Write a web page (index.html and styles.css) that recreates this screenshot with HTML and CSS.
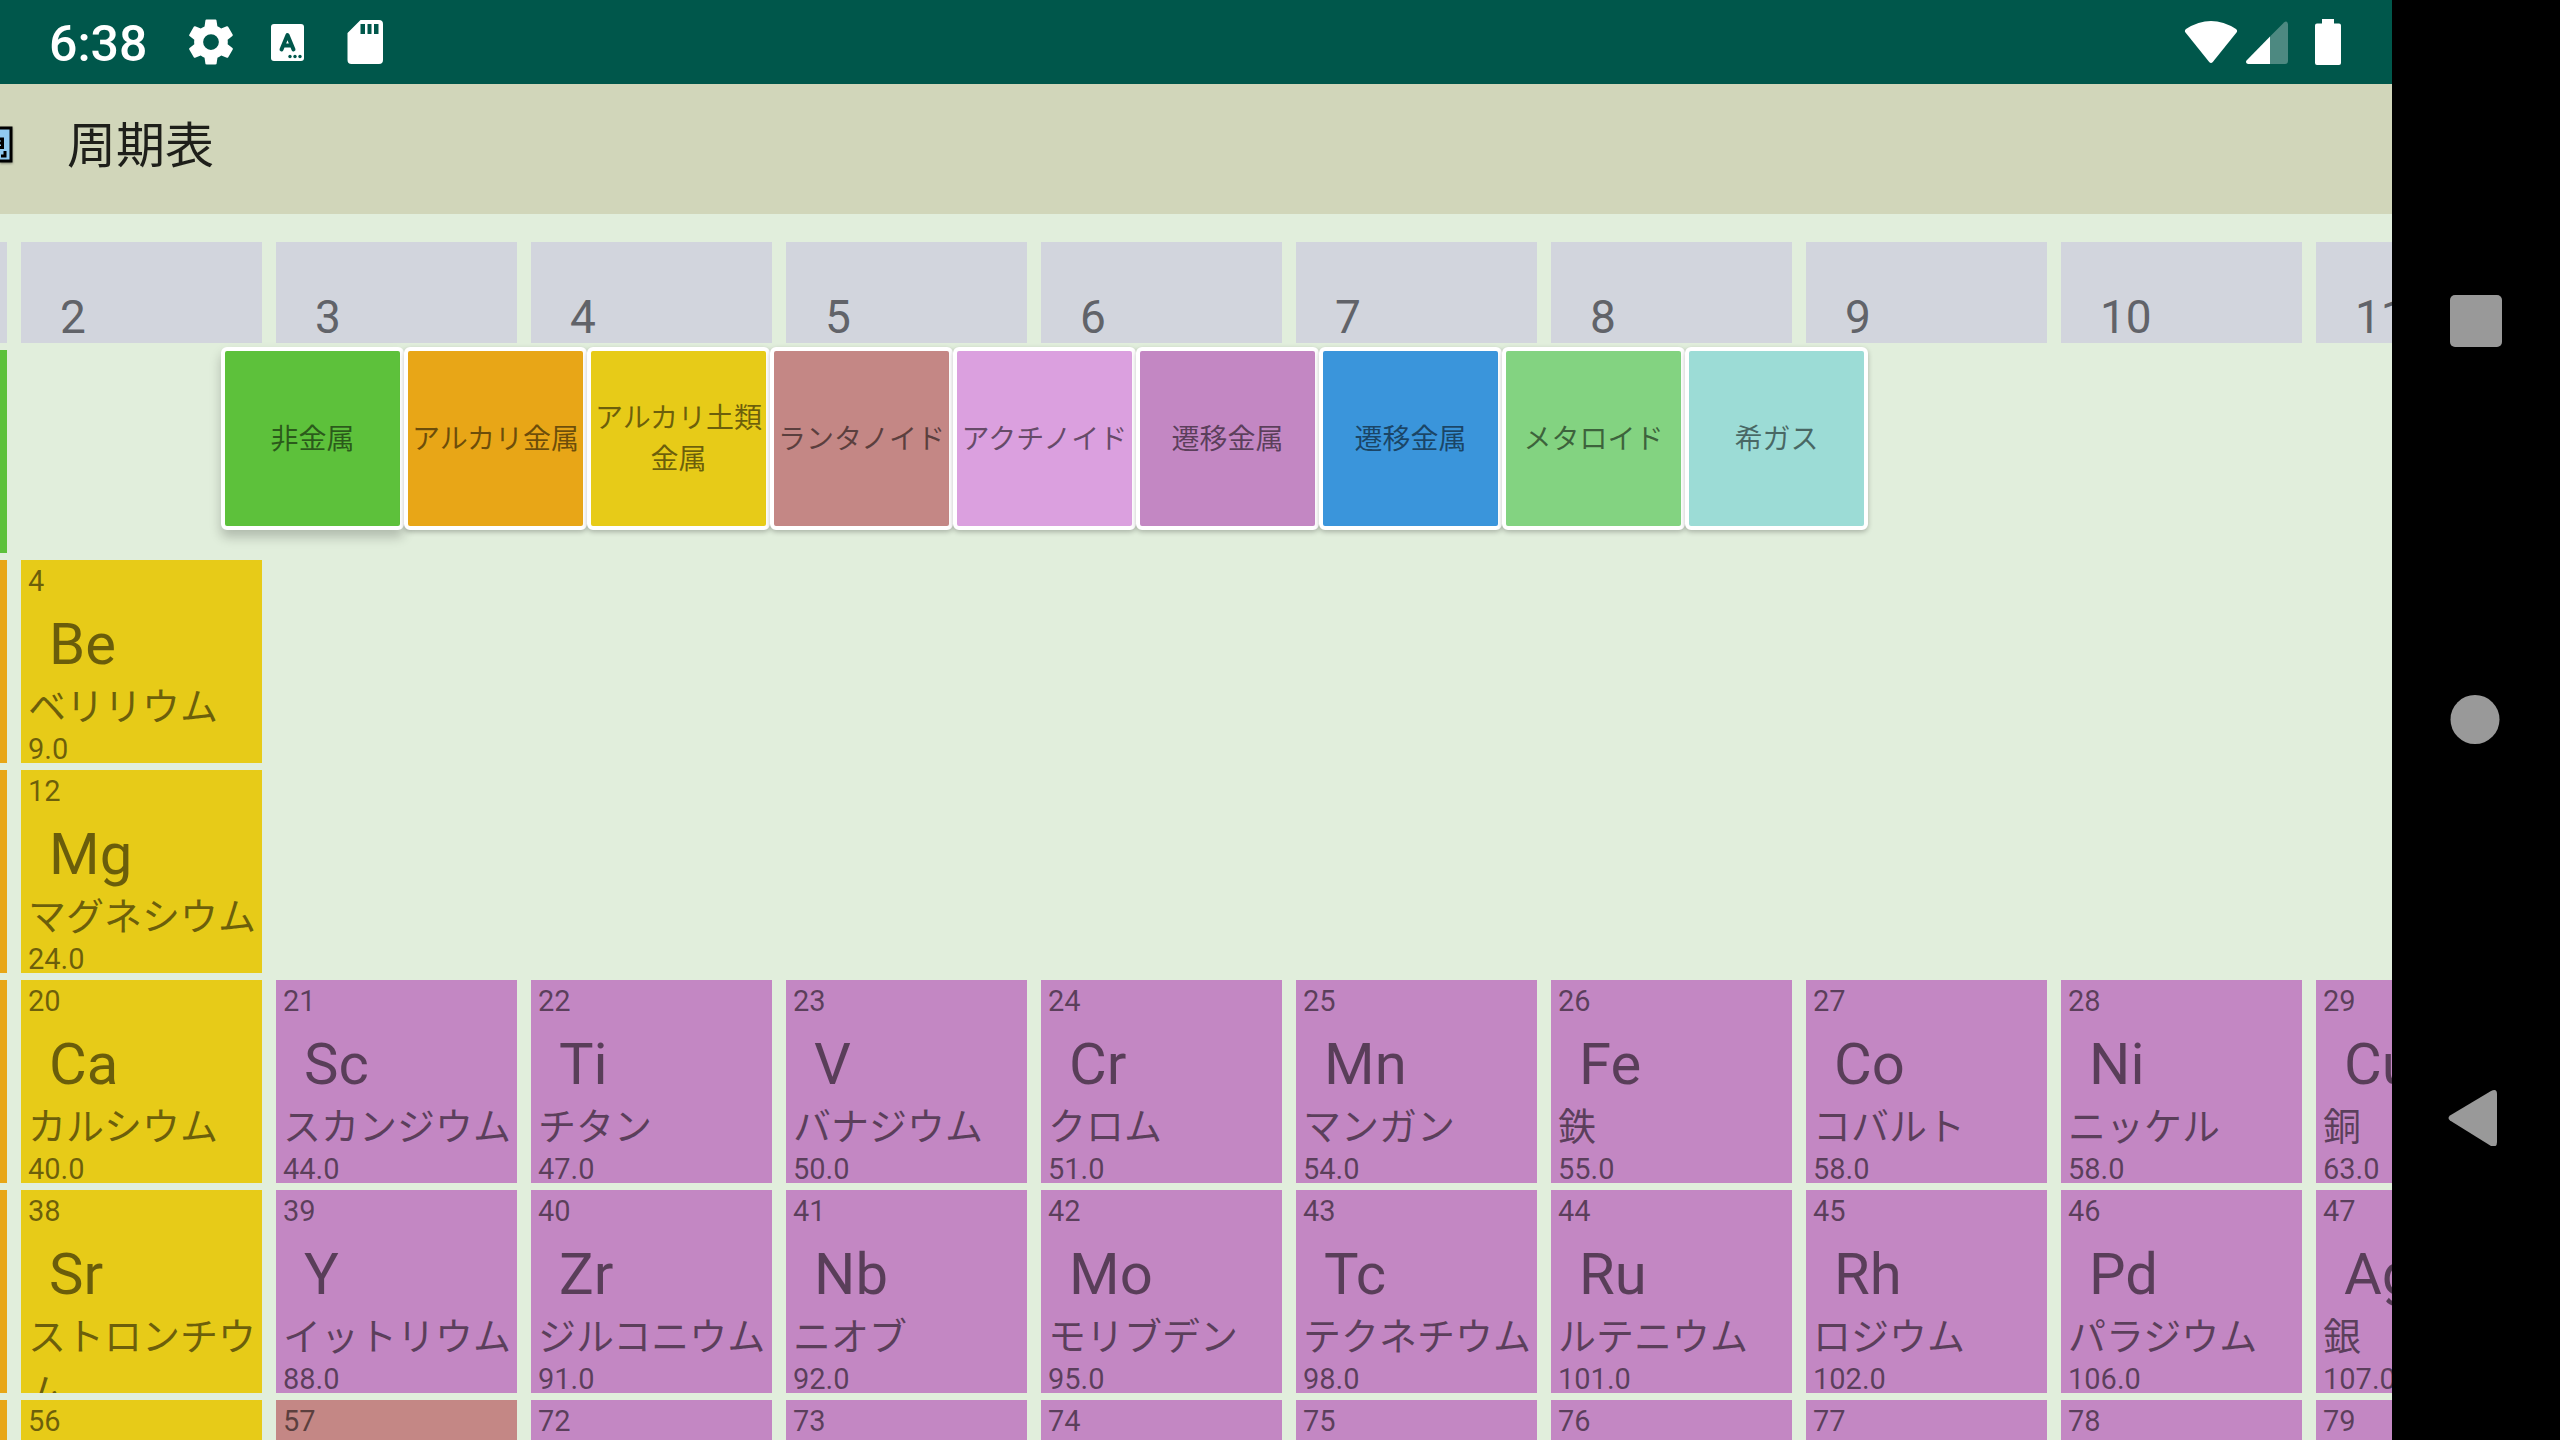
FILE: index.html
```html
<!DOCTYPE html>
<html lang="ja">
<head>
<meta charset="utf-8">
<title>周期表</title>
<link rel="stylesheet" href="styles.css">
</head>
<body>
<div class="device">
  <div class="app">
    <div class="status">
      <span class="clock">6:38</span>
      <svg class="notice" viewBox="0 0 24 24"><path d="M19.4 13a7.500 7.500 0 0 0 0-2l2.100-1.650a.5.5 0 0 0 .12-.64l-2-3.460a.5.5 0 0 0-.61-.22l-2.490 1a7.300 7.300 0 0 0-1.690-.98l-.38-2.650A.49.49 0 0 0 14 2h-4a.49.49 0 0 0-.49.420l-.38 2.650c-.61.25-1.170.59-1.690.98l-2.490-1a.5.5 0 0 0-.61.220l-2 3.460a.49.49 0 0 0 .12.640L4.570 11a7.900 7.900 0 0 0 0 2l-2.110 1.650a.5.5 0 0 0-.12.640l2 3.460c.12.220.39.300.61.220l2.490-1c.52.4 1.080.73 1.690.98l.38 2.650c.03.24.24.420.49.420h4c.25 0 .46-.18.49-.42l.38-2.650c.61-.25 1.170-.59 1.690-.98l2.490 1c.23.090.49 0 .61-.22l2-3.460a.5.5 0 0 0-.12-.64zM12 15.500a3.500 3.500 0 1 1 0-7 3.500 3.500 0 0 1 0 7z"/></svg>
      <svg class="notice" viewBox="0 0 54 54"><rect x="10" y="9" width="33" height="37" rx="3"/><path class="cut-line" d="M20.500 34.500L26.500 20l6 14.500M22.500 30.500h8"/><g class="cut"><circle cx="29" cy="41.500" r="1.700"/><circle cx="34" cy="41.500" r="1.700"/><circle cx="39" cy="41.500" r="1.700"/></g></svg>
      <svg class="notice" viewBox="0 0 54 54"><path fill-rule="evenodd" d="M22.500 5H41a4 4 0 0 1 4 4v36a4 4 0 0 1-4 4H13.500a4 4 0 0 1-4-4V18zM22.500 9v10H27V9zM29.500 9v10h4V9zM36 9v10h4.500V9z"/></svg>
      <div class="system">
        <svg class="wifi" viewBox="0 0 54 44"><path d="M1.500 12.500Q0 10.500 2 9Q27-7 52 9Q54 10.500 52.500 12.500L28.800 42Q27 44 25.200 42z"/></svg>
        <svg class="signal" viewBox="0 0 42 43"><path class="faint" d="M24 15.500L38 1.500Q41-1 42 3V40Q42 43 39 43H24z"/><path d="M24 15.500V43H2Q-1 42 .5 39.500z"/></svg>
        <svg class="battery" viewBox="0 0 26 46"><path d="M7 0h12v4.500h5a2 2 0 0 1 2 2V44a2 2 0 0 1-2 2H2a2 2 0 0 1-2-2V6.500a2 2 0 0 1 2-2h5z"/></svg>
      </div>
    </div>
    <header class="toolbar">
      <svg class="app-icon" viewBox="0 0 14 42"><rect class="frame" x="-24" y="2" width="35" height="33"/><path d="M0 13h2.500v8.500H0M0 17h2M1 30h4v-5"/></svg>
      <h1>周期表</h1>
    </header>
    <main class="board">
      <table class="elements">
        <thead><tr><th></th><th>2</th><th>3</th><th>4</th><th>5</th><th>6</th><th>7</th><th>8</th><th>9</th><th>10</th><th>11</th></tr></thead>
        <tbody>
          <tr>
            <td class="nonmetal"><div class="cell"></div></td>
          </tr>
          <tr>
            <td class="alkali"></td>
            <td class="earth"><div class="cell"><p>4</p><b>Be</b><i>ベリリウム</i><p>9.0</p></div></td>
          </tr>
          <tr>
            <td class="alkali"></td>
            <td class="earth"><div class="cell"><p>12</p><b>Mg</b><i>マグネシウム</i><p>24.0</p></div></td>
          </tr>
          <tr>
            <td class="alkali"></td>
            <td class="earth"><div class="cell"><p>20</p><b>Ca</b><i>カルシウム</i><p>40.0</p></div></td>
            <td class="transition"><div class="cell"><p>21</p><b>Sc</b><i>スカンジウム</i><p>44.0</p></div></td>
            <td class="transition"><div class="cell"><p>22</p><b>Ti</b><i>チタン</i><p>47.0</p></div></td>
            <td class="transition"><div class="cell"><p>23</p><b>V</b><i>バナジウム</i><p>50.0</p></div></td>
            <td class="transition"><div class="cell"><p>24</p><b>Cr</b><i>クロム</i><p>51.0</p></div></td>
            <td class="transition"><div class="cell"><p>25</p><b>Mn</b><i>マンガン</i><p>54.0</p></div></td>
            <td class="transition"><div class="cell"><p>26</p><b>Fe</b><i>鉄</i><p>55.0</p></div></td>
            <td class="transition"><div class="cell"><p>27</p><b>Co</b><i>コバルト</i><p>58.0</p></div></td>
            <td class="transition"><div class="cell"><p>28</p><b>Ni</b><i>ニッケル</i><p>58.0</p></div></td>
            <td class="transition"><div class="cell"><p>29</p><b>Cu</b><i>銅</i><p>63.0</p></div></td>
          </tr>
          <tr>
            <td class="alkali"></td>
            <td class="earth"><div class="cell"><p>38</p><b>Sr</b><i>ストロンチウム</i></div></td>
            <td class="transition"><div class="cell"><p>39</p><b>Y</b><i>イットリウム</i><p>88.0</p></div></td>
            <td class="transition"><div class="cell"><p>40</p><b>Zr</b><i>ジルコニウム</i><p>91.0</p></div></td>
            <td class="transition"><div class="cell"><p>41</p><b>Nb</b><i>ニオブ</i><p>92.0</p></div></td>
            <td class="transition"><div class="cell"><p>42</p><b>Mo</b><i>モリブデン</i><p>95.0</p></div></td>
            <td class="transition"><div class="cell"><p>43</p><b>Tc</b><i>テクネチウム</i><p>98.0</p></div></td>
            <td class="transition"><div class="cell"><p>44</p><b>Ru</b><i>ルテニウム</i><p>101.0</p></div></td>
            <td class="transition"><div class="cell"><p>45</p><b>Rh</b><i>ロジウム</i><p>102.0</p></div></td>
            <td class="transition"><div class="cell"><p>46</p><b>Pd</b><i>パラジウム</i><p>106.0</p></div></td>
            <td class="transition"><div class="cell"><p>47</p><b>Ag</b><i>銀</i><p>107.0</p></div></td>
          </tr>
          <tr>
            <td class="alkali"></td>
            <td class="earth"><div class="cell"><p>56</p></div></td>
            <td class="lanthanoid"><div class="cell"><p>57</p></div></td>
            <td class="transition"><div class="cell"><p>72</p></div></td>
            <td class="transition"><div class="cell"><p>73</p></div></td>
            <td class="transition"><div class="cell"><p>74</p></div></td>
            <td class="transition"><div class="cell"><p>75</p></div></td>
            <td class="transition"><div class="cell"><p>76</p></div></td>
            <td class="transition"><div class="cell"><p>77</p></div></td>
            <td class="transition"><div class="cell"><p>78</p></div></td>
            <td class="transition"><div class="cell"><p>79</p></div></td>
          </tr>
        </tbody>
      </table>
      <div class="legend">
        <button class="key raised nonmetal">非金属</button>
        <button class="key alkali">アルカリ金属</button>
        <button class="key earth">アルカリ土類金属</button>
        <button class="key lanthanoid">ランタノイド</button>
        <button class="key actinoid">アクチノイド</button>
        <button class="key transition">遷移金属</button>
        <button class="key post">遷移金属</button>
        <button class="key metalloid">メタロイド</button>
        <button class="key noble">希ガス</button>
      </div>
    </main>
  </div>
  <nav class="navbar">
    <button aria-label="Recent apps"><svg viewBox="0 0 56 56"><rect x="2" y="1" width="52" height="52" rx="5"/></svg></button>
    <button aria-label="Home"><svg viewBox="0 0 56 56"><circle cx="27" cy="27.500" r="24.500"/></svg></button>
    <button aria-label="Back"><svg viewBox="0 0 56 56"><path d="M2 25.500L43 1q6-3 6 3v48q0 6-6 4L2 30.500q-3-2.500 0-5z"/></svg></button>
  </nav>
</div>
</body>
</html>
```
FILE: styles.css
```css
* {
  box-sizing: border-box;
}

body {
  margin: 0;
  font-family: Roboto, "Noto Sans CJK JP", sans-serif;
  background: #000;
}

button {
  margin: 0;
  padding: 0;
  border: 0;
  background: none;
  font-family: inherit;
}

.device {
  display: flex;
  height: 100vh;
  overflow: hidden;
}

.app {
  display: flex;
  flex: 1;
  flex-direction: column;
  min-width: 0;
  overflow: hidden;
  background: #e1eedc;
}

/* status bar */
.status {
  display: flex;
  flex: none;
  align-items: center;
  gap: 23px;
  height: 84px;
  padding: 0 51px 0 49px;
  background: #00574b;
  color: #fff;
}

.clock {
  margin-right: 14px;
  padding-top: 4px;
  font-size: 50px;
  font-weight: 500;
  line-height: 56px;
}

.status svg {
  fill: #fff;
}

.notice {
  width: 54px;
  height: 54px;
}

.status .cut {
  fill: #00574b;
}

.status .cut-line {
  fill: none;
  stroke: #00574b;
  stroke-width: 4;
  stroke-linecap: round;
  stroke-linejoin: round;
}

.system {
  display: flex;
  align-items: center;
  margin-left: auto;
}

.wifi {
  width: 54px;
  height: 44px;
  margin-right: 8px;
}

.signal {
  width: 42px;
  height: 43px;
  margin-right: 27px;
}

.battery {
  width: 26px;
  height: 46px;
}

.faint {
  opacity: .3;
}

/* title bar */
.toolbar {
  display: flex;
  flex: none;
  align-items: center;
  gap: 53px;
  height: 130px;
  padding-bottom: 5px;
  background: #d1d6ba;
}

.toolbar h1 {
  margin: 0;
  color: #1e1f1a;
  font-size: 49px;
  font-weight: 400;
  line-height: 71px;
}

.app-icon {
  width: 14px;
  height: 42px;
  fill: none;
  stroke: #000;
  stroke-width: 3;
  filter: drop-shadow(0 1px 1px rgba(0, 0, 0, .4));
}

.app-icon .frame {
  fill: #90caf0;
}

/* table, scrolled sideways past its first column */
.board {
  position: relative;
  flex: 1;
  min-height: 0;
  padding-top: 21px;
  overflow: hidden;
}

.elements {
  width: 2819px;
  margin-left: -248px;
  border-spacing: 14px 7px;
  table-layout: fixed;
}

.elements th,
.elements td {
  padding: 0;
  text-align: left;
  vertical-align: top;
}

.elements th {
  height: 101px;
  padding-left: 39px;
  background: #d2d5dd;
  color: #616369;
  font-size: 46px;
  font-weight: 400;
  line-height: 52px;
  vertical-align: bottom;
}

.cell {
  height: 203px;
  padding: 4px 0 0 7px;
  overflow: hidden;
  color: rgba(0, 0, 0, .54);
}

.cell p {
  margin: 0;
  font-size: 29px;
  line-height: 34px;
}

.cell b {
  display: block;
  padding: 11px 0 0 21px;
  font-size: 58px;
  font-weight: 400;
  line-height: 70px;
}

.cell i {
  display: block;
  margin-bottom: -3px;
  font-size: 38px;
  font-style: normal;
  line-height: 56px;
}

/* element groups */
.nonmetal { background: #5dc13b; }
.alkali { background: #e8a617; }
.earth { background: #e7cb18; }
.lanthanoid { background: #c48785; }
.actinoid { background: #dba0df; }
.transition { background: #c387c3; }
.post { background: #3a95db; }
.metalloid { background: #83d381; }
.noble { background: #9cdcd6; }

/* legend floating over the table */
.legend {
  position: absolute;
  top: 133px;
  left: 221px;
  display: flex;
}

.key {
  width: 183px;
  height: 183px;
  padding-top: 1px;
  border: 4px solid #fff;
  border-radius: 6px;
  box-shadow: 0 2px 5px rgba(0, 0, 0, .25);
  color: rgba(0, 0, 0, .54);
  font-size: 28px;
  line-height: 41px;
}

.raised {
  box-shadow: 0 7px 12px rgba(0, 0, 0, .22);
}

/* navigation bar */
.navbar {
  display: flex;
  flex: none;
  flex-direction: column;
  justify-content: center;
  gap: 342px;
  width: 168px;
  background: #000;
}

.navbar button {
  height: 56px;
}

.navbar svg {
  display: block;
  width: 56px;
  height: 56px;
  margin: 0 auto;
  fill: #999;
}
```
